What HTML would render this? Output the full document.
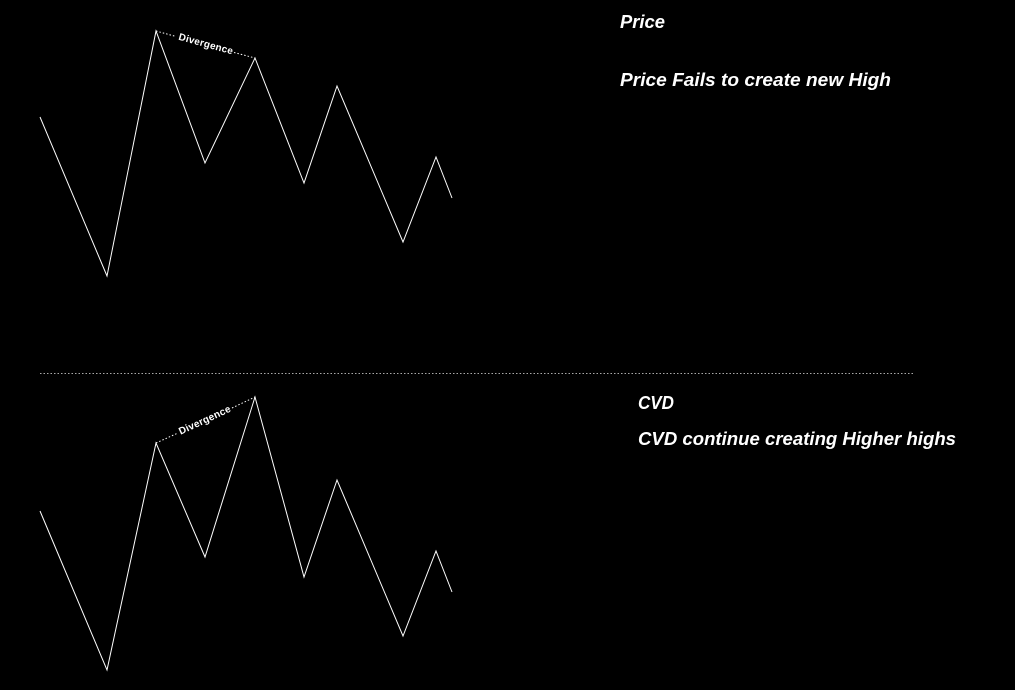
<!DOCTYPE html>
<html><head><style>html,body{margin:0;padding:0;background:#000;overflow:hidden}</style></head>
<body>
<svg width="1015" height="690" viewBox="0 0 1015 690" xmlns="http://www.w3.org/2000/svg" style="display:block">
<rect width="1015" height="690" fill="#000"/>
<g fill="none" stroke="#fff" stroke-width="1">
<polyline points="40,117 107,276 156,31 205,163 255,58 304,183 337,86 403,242 436,157 452,198"/>
<polyline points="40,511 107,670 156,443 205,557 255,397 304,577 337,480 403,636 436,551 452,592"/>
</g>
<g stroke="#fff" stroke-width="1" stroke-dasharray="1.5 2">
<line x1="156" y1="31" x2="176" y2="36.5"/>
<line x1="234" y1="52.5" x2="255" y2="58"/>
<line x1="156" y1="443" x2="178" y2="433"/>
<line x1="232" y1="408" x2="255" y2="397"/>
<line x1="40" y1="373.5" x2="913" y2="373.5" stroke="#aaa"/>
</g>
<g fill="#fff" font-family="Liberation Sans, sans-serif" font-weight="bold" font-size="10">
<text transform="translate(205,47) rotate(15.3)" text-anchor="middle" textLength="56">Divergence</text>
<text transform="translate(206,423) rotate(-24.9)" text-anchor="middle" textLength="56">Divergence</text>
</g>
<g fill="#fff" font-family="Liberation Sans, sans-serif" font-weight="bold" font-style="italic" font-size="18">
<text x="620" y="28" textLength="45" lengthAdjust="spacingAndGlyphs">Price</text>
<text x="620" y="86" textLength="271" lengthAdjust="spacingAndGlyphs">Price Fails to create new High</text>
<text x="638" y="409" textLength="36" lengthAdjust="spacingAndGlyphs">CVD</text>
<text x="638" y="445" textLength="318" lengthAdjust="spacingAndGlyphs">CVD continue creating Higher highs</text>
</g>
</svg>
</body></html>
